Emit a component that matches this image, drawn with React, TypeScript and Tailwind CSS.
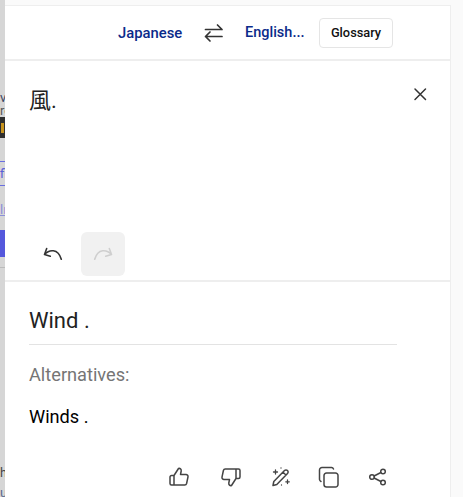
import React from "react";

const S = ({ children, size = 24, className = "" }: { children: React.ReactNode; size?: number; className?: string }) => (
  <svg width={size} height={size} viewBox="0 0 24 24" fill="none" stroke="currentColor" strokeWidth={1.5} strokeLinecap="round" strokeLinejoin="round" className={className}>
    {children}
  </svg>
);

function Strip() {
  return (
    <div className="w-[5px] shrink-0 h-[497px] bg-[#d6d6d6] flex flex-col overflow-hidden text-[13px] leading-[13px] font-['Roboto',sans-serif]">
      <div className="h-[91px] shrink-0" />
      <div className="h-[13px] shrink-0 overflow-hidden text-[#3a4560] whitespace-nowrap">v</div>
      <div className="h-[13px] shrink-0 overflow-hidden text-[#555] whitespace-nowrap">re</div>
      <div className="h-[21px] shrink-0 bg-[#2f2f2f] flex items-center"><div className="ml-[1px] w-[3px] h-[10px] bg-[#c8941e]" /></div>
      <div className="h-[23px] shrink-0" />
      <div className="h-[1px] shrink-0 bg-[#6a6fe0]" />
      <div className="h-[23px] shrink-0 overflow-hidden leading-[23px] text-[#5a60d8] whitespace-nowrap">fi</div>
      <div className="h-[1px] shrink-0 bg-[#6a6fe0]" />
      <div className="h-[17px] shrink-0" />
      <div className="h-[14px] shrink-0 overflow-hidden text-[#8a8fd8] underline whitespace-nowrap">lı</div>
      <div className="h-[13px] shrink-0" />
      <div className="h-[27px] shrink-0 bg-[#5558dc]" />
      <div className="h-[10px] shrink-0" />
      <div className="h-[1px] shrink-0 bg-[#bbb]" />
      <div className="h-[198px] shrink-0" />
      <div className="h-[14px] shrink-0 overflow-hidden text-[#444] whitespace-nowrap">h</div>
      <div className="h-[6px] shrink-0" />
      <div className="h-[12px] shrink-0 overflow-hidden text-[#5a6a90] underline whitespace-nowrap">u</div>
    </div>
  );
}

export default function App() {
  return (
    <div className="w-[463px] h-[497px] overflow-hidden flex bg-[#fafafa] font-['Roboto','Noto_Sans_CJK_JP',sans-serif]">
      <Strip />
      <div className="w-[446px] shrink-0 pt-[5px]">
        <div className="h-[492px] bg-white border-t border-r border-[#eeeeee] flex flex-col">
          <div className="h-[55px] shrink-0 border-b-2 border-[#eeeeee] flex items-center pl-[113px] pt-[1px]">
            <span className="w-[65px] text-[14.8px] font-medium text-[#0b2a8a] whitespace-nowrap">Japanese</span>
            <span className="ml-[21px] text-[#333]">
              <svg width="20" height="20" viewBox="0 0 20 20" fill="none" stroke="currentColor" strokeWidth={1.7} strokeLinecap="round" strokeLinejoin="round">
                <path d="M1.5 6.5H18M13.5 2L18 6.5M18 13.500H1.500M6 9L1.500 13.500L6 18" />
              </svg>
            </span>
            <span className="ml-[21px] w-[59px] text-[14.5px] font-medium text-[#0b2a8a] whitespace-nowrap">English...</span>
            <button className="ml-[15px] w-[74px] h-[30px] rounded-[4px] border border-[#e5e5e5] bg-white text-[12.8px] font-medium text-[#111] flex items-center justify-center">Glossary</button>
          </div>
          <div className="h-[221px] shrink-0 border-b-2 border-[#eeeeee] flex flex-col relative">
            <div className="flex justify-between pl-[24px] pr-[20px] pt-[20px]">
              <span className="text-[22px] leading-[40px] text-[#222]">風.</span>
              <span className="text-[#333] mt-[3px]">
                <svg width="20" height="20" viewBox="0 0 20 20" fill="none" stroke="currentColor" strokeWidth={1.5} strokeLinecap="round">
                  <path d="M5 5L15.500 15.500M15.500 5L5 15.500" />
                </svg>
              </span>
            </div>
            <div className="mt-auto mb-[4px] flex items-center pl-[31px]">
              <span className="w-[45px] h-[44px] flex items-center justify-center pr-[12px] text-[#333]">
                <S size={24}><path d="M5.700 6.500L3.500 12.500L9.300 14.300M3.500 12.500C8 7.500 17 6 20.300 17.300" strokeWidth={1.6} /></S>
              </span>
              <span className="w-[44px] h-[44px] rounded-md bg-[#f1f1f1] flex items-center justify-center text-[#cfcfcf]">
                <S size={24}><path d="M18.300 6.500L20.500 12.500L14.700 14.300M20.500 12.500C16 7.500 7 6 3.700 17.300" strokeWidth={1.6} /></S>
              </span>
            </div>
          </div>
          <div className="pl-[24px] flex flex-col flex-1">
            <div className="w-[368px] h-[63px] shrink-0 border-b border-[#e3e3e3] text-[22px] leading-[32px] pt-[23px] text-[#222]">Wind .</div>
            <div className="mt-[19px] text-[18.2px] leading-[22px] text-[#757575]">Alternatives:</div>
            <div className="mt-[20px] text-[18.2px] leading-[22px] text-black">Winds .</div>
            <div className="mt-[37px] ml-[138px] flex items-center text-[#444]">
              <S>
                <path d="M7 10.500v9.500H4.500A1.500 1.500 0 0 1 3 18.500v-6.500A1.500 1.500 0 0 1 4.500 10.500H7ZM7 10.500L11.500 3.500C13 3 14.500 4.200 14.200 6L13.500 9.500H19a2 2 0 0 1 2 2.400l-1.400 6.600A2 2 0 0 1 17.600 20H7" />
              </S>
              <S className="ml-[28px]">
                <path d="M17 13.500V4h2.500A1.500 1.500 0 0 1 21 5.500V12a1.500 1.500 0 0 1-1.500 1.500H17ZM17 13.500L12.500 20.500C11 21 9.500 19.800 9.800 18L10.500 14.500H5a2 2 0 0 1-2-2.400L4.400 5.500A2 2 0 0 1 6.400 4H17" />
              </S>
              <S className="ml-[26px]">
                <path d="M4 20.500L4.800 16.500L15.500 5.500A2 2 0 0 1 18.500 8.500L7.800 19.500L4 20.500ZM14 7.200L17 10" />
                <path d="M6.500 5v4M4.500 7h4M18.500 15v3.500M16.800 16.800h3.500M12.500 20h.01M12 3h.01" strokeWidth={1.3} />
              </S>
              <S className="ml-[23.5px]">
                <path d="M9.500 8h9A2.500 2.500 0 0 1 21 10.500v9a2.500 2.500 0 0 1-2.500 2.500h-9A2.500 2.500 0 0 1 7 19.500v-9A2.500 2.500 0 0 1 9.500 8Z" />
                <path d="M4 16.500A2.500 2.500 0 0 1 2.500 14.500V5A2.500 2.500 0 0 1 5 2.500h9.500A2.500 2.500 0 0 1 16.500 4" />
              </S>
              <S className="ml-[24px]">
                <circle cx="18" cy="6.500" r="2.300" />
                <circle cx="7" cy="12" r="2.300" />
                <circle cx="18" cy="17.500" r="2.300" />
                <path d="M9.100 11L15.900 7.500M9.100 13L15.900 16.500" />
              </S>
            </div>
          </div>
        </div>
      </div>
    </div>
  );
}
